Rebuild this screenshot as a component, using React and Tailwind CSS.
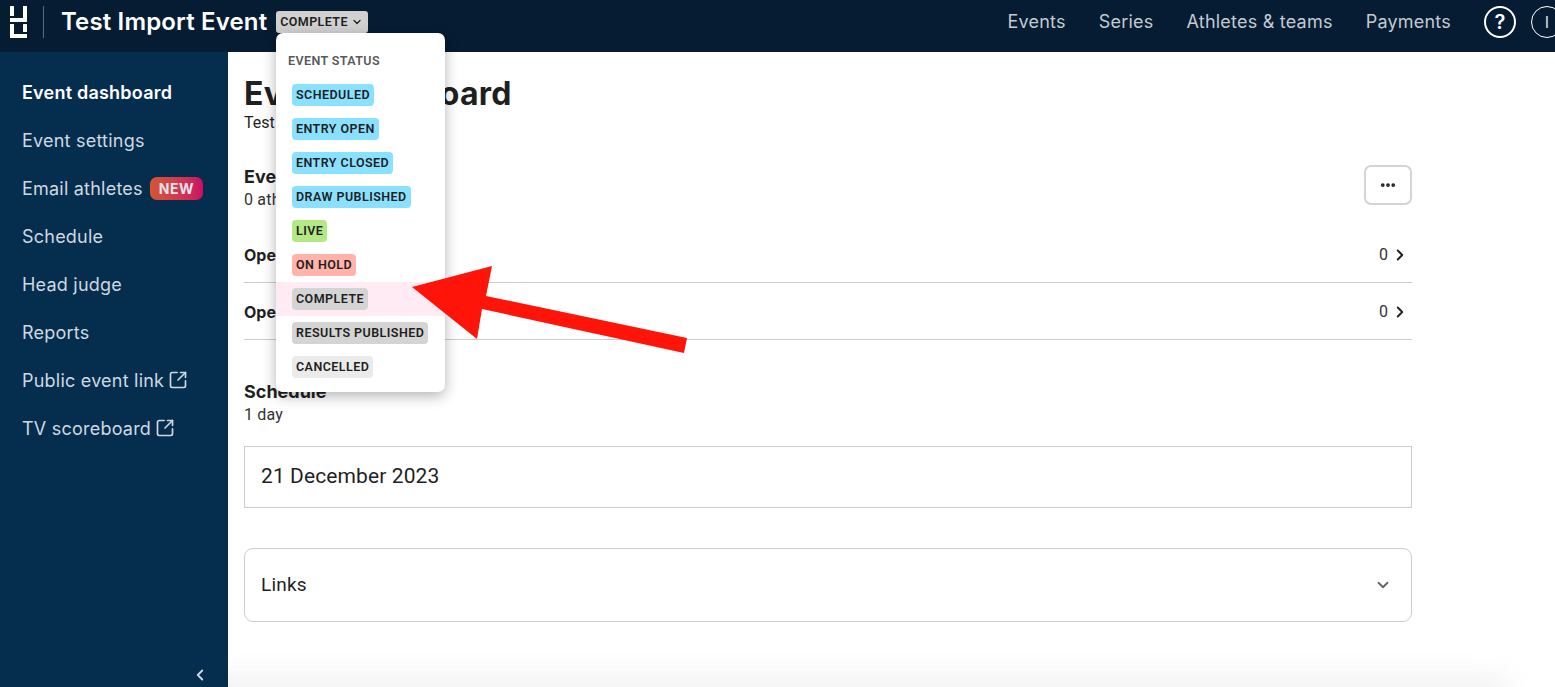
import React from 'react'
import { ChevronDown, ChevronLeft, ChevronRight, SquareArrowOutUpRight, Ellipsis } from 'lucide-react'

const statuses = [
  { label: 'SCHEDULED', color: 'bg-[#8ae1ff]' },
  { label: 'ENTRY OPEN', color: 'bg-[#8ae1ff]' },
  { label: 'ENTRY CLOSED', color: 'bg-[#8ae1ff]' },
  { label: 'DRAW PUBLISHED', color: 'bg-[#8ae1ff]' },
  { label: 'LIVE', color: 'bg-[#b4e884]' },
  { label: 'ON HOLD', color: 'bg-[#ffb3aa]' },
  { label: 'COMPLETE', color: 'bg-[#d4d4d4]', active: true },
  { label: 'RESULTS PUBLISHED', color: 'bg-[#d4d4d4]' },
  { label: 'CANCELLED', color: 'bg-[#ebebeb]' },
]

const navLinks = ['Events', 'Series', 'Athletes & teams', 'Payments']

function Logo() {
  return (
    <svg width="17" height="32" viewBox="0 0 17 32" fill="#fff">
      <rect x="0" y="0" width="4" height="10" rx="0.5" />
      <rect x="0" y="12" width="17" height="4" />
      <rect x="13" y="0" width="4" height="16" />
      <rect x="0" y="18" width="4" height="14" />
      <rect x="0" y="28" width="17" height="4" />
      <rect x="13" y="18" width="4" height="8" rx="0.5" />
    </svg>
  )
}

function SideItem({ children, bold }) {
  return (
    <div className={`flex h-12 items-center gap-[7px] pl-[22px] text-[18px] tracking-[0.22px] ${bold ? 'font-semibold text-white' : 'text-[#cfd8e0]'}`}>
      {children}
    </div>
  )
}

function Row({ label }) {
  return (
    <div className="flex h-[57px] items-center justify-between border-b border-[#cccccc] pr-[3px] pt-px">
      <span className="font-['Inter',sans-serif] text-[16px] font-bold text-[#1f1f1f]">{label}</span>
      <span className="flex items-center gap-[3px] text-[16px] text-[#333]">
        0 <ChevronRight size={18} strokeWidth={2.5} className="text-[#1f1f1f]" />
      </span>
    </div>
  )
}

export default function App() {
  return (
    <div className="relative h-[687px] w-[1555px] overflow-hidden bg-white font-['Inter',sans-serif]">
      <header className="flex h-[52px] items-center justify-between overflow-hidden bg-[#051c33] pb-2 pl-[10px]">
        <div className="flex items-center">
          <Logo />
          <div className="ml-4 h-8 w-px bg-[#5c6b7a]" />
          <span className="ml-[17px] text-[24px] font-semibold tracking-[0.15px] text-white">Test Import Event</span>
          <button className="ml-[9px] flex h-[22px] items-center gap-[3px] rounded-[3px] bg-[#d1d1d1] pl-1 pr-[5px] font-['Roboto',sans-serif] text-[12.5px] font-semibold tracking-[0.4px] text-[#1f1f1f]">
            COMPLETE <ChevronDown size={12} strokeWidth={2.5} />
          </button>
        </div>
        <div className="flex items-center">
          <nav className="-mt-0.5 flex items-center gap-[33px] text-[18px] tracking-[0.22px] text-[#c3cad1]">
            {navLinks.map((link) => <span key={link}>{link}</span>)}
          </nav>
          <div className="ml-[33px] flex h-8 w-8 items-center justify-center rounded-full border-2 border-white text-[20px] font-semibold text-white">?</div>
          <div className="ml-[15px] mr-[-8px] flex h-8 w-8 items-center justify-center rounded-full border border-white text-[16px] text-[#d8dde2]">I</div>
        </div>
      </header>

      <div className="flex h-[635px]">
        <aside className="relative w-[228px] shrink-0 bg-[#052e4e] pt-4">
          <SideItem bold>Event dashboard</SideItem>
          <SideItem>Event settings</SideItem>
          <SideItem>
            Email athletes
            <span className="rounded-[7px] bg-gradient-to-r from-[#d4552e] to-[#cc0a63] px-[9px] py-[1px] text-[14px] font-bold tracking-[0.5px] text-[#dfe4ea]">NEW</span>
          </SideItem>
          <SideItem>Schedule</SideItem>
          <SideItem>Head judge</SideItem>
          <SideItem>Reports</SideItem>
          <SideItem>Public event link <SquareArrowOutUpRight size={20} className="-ml-[3px]" /></SideItem>
          <SideItem>TV scoreboard <SquareArrowOutUpRight size={20} className="-ml-[3px]" /></SideItem>
          <ChevronLeft size={18} strokeWidth={2.5} className="absolute bottom-[3px] right-[19px] text-[#cfd8e0]" />
        </aside>

        <main className="relative flex-1 overflow-hidden pl-4 pr-[143px] font-['Roboto',sans-serif] text-[#1f1f1f]">
          <h1 className="mt-[23px] font-['Inter',sans-serif] text-[32px] font-bold leading-[38px] tracking-[0.25px]">Event dashboard</h1>
          <p className="text-[16px] leading-[20px]">Test Import Event</p>

          <div className="mt-[33px] flex items-start justify-between">
            <div>
              <div className="font-['Inter',sans-serif] text-[18px] font-bold leading-[22px]">Event categories</div>
              <div className="pt-px text-[16px] leading-[21px] tracking-[0.2px] text-[#333]">0 athletes</div>
            </div>
            <button className="-mt-px flex h-10 w-12 items-center justify-center rounded-[7px] border-2 border-[#d4d4d4]">
              <Ellipsis size={18} strokeWidth={3} className="text-[#1f1f1f]" />
            </button>
          </div>

          <div className="mt-4">
            <Row label="Open Men" />
            <Row label="Open Women" />
          </div>

          <div className="mt-[41px] font-['Inter',sans-serif] text-[18px] font-bold leading-[22px]">Schedule</div>
          <div className="pt-px text-[16px] leading-[21px] tracking-[0.2px] text-[#333]">1 day</div>

          <div className="mt-[21px] flex h-[62px] items-center border border-[#cccccc] px-4 text-[21px] tracking-[0.1px]">21 December 2023</div>

          <div className="mt-10 flex h-[74px] items-center justify-between rounded-[9px] border border-[#cccccc] pl-4 pr-[19px] text-[19px] tracking-[0.2px]">
            Links
            <ChevronDown size={18} strokeWidth={2.5} className="text-[#666]" />
          </div>

          <div className="absolute -bottom-4 -left-8 right-[50px] h-6 bg-[#ededed] blur-[14px]" />
        </main>
      </div>

      <div className="absolute left-[276px] top-[33px] h-[359px] w-[169px] rounded-[7px] bg-white font-['Roboto',sans-serif] shadow-[0_4px_14px_rgba(0,0,0,0.3)]">
        <div className="flex h-[45px] items-end pb-[7px] pl-3 text-[12.5px] font-semibold tracking-[0.4px] text-[#595959]">EVENT STATUS</div>
        {statuses.map((s) => (
          <div key={s.label} className={`flex h-[34px] items-center pl-4 ${s.active ? 'bg-[#ffebf3]' : ''}`}>
            <span className={`rounded-[4px] px-1 text-[12.5px] font-semibold leading-[22px] tracking-[0.45px] text-[#1f1f1f] ${s.color}`}>{s.label}</span>
          </div>
        ))}
      </div>

      <svg className="pointer-events-none absolute left-0 top-0" width="1555" height="687">
        <polygon fill="#ff140a" points="412,287 492,266 486,296 687,338 684,353 482,309 477,339" />
      </svg>
    </div>
  )
}
